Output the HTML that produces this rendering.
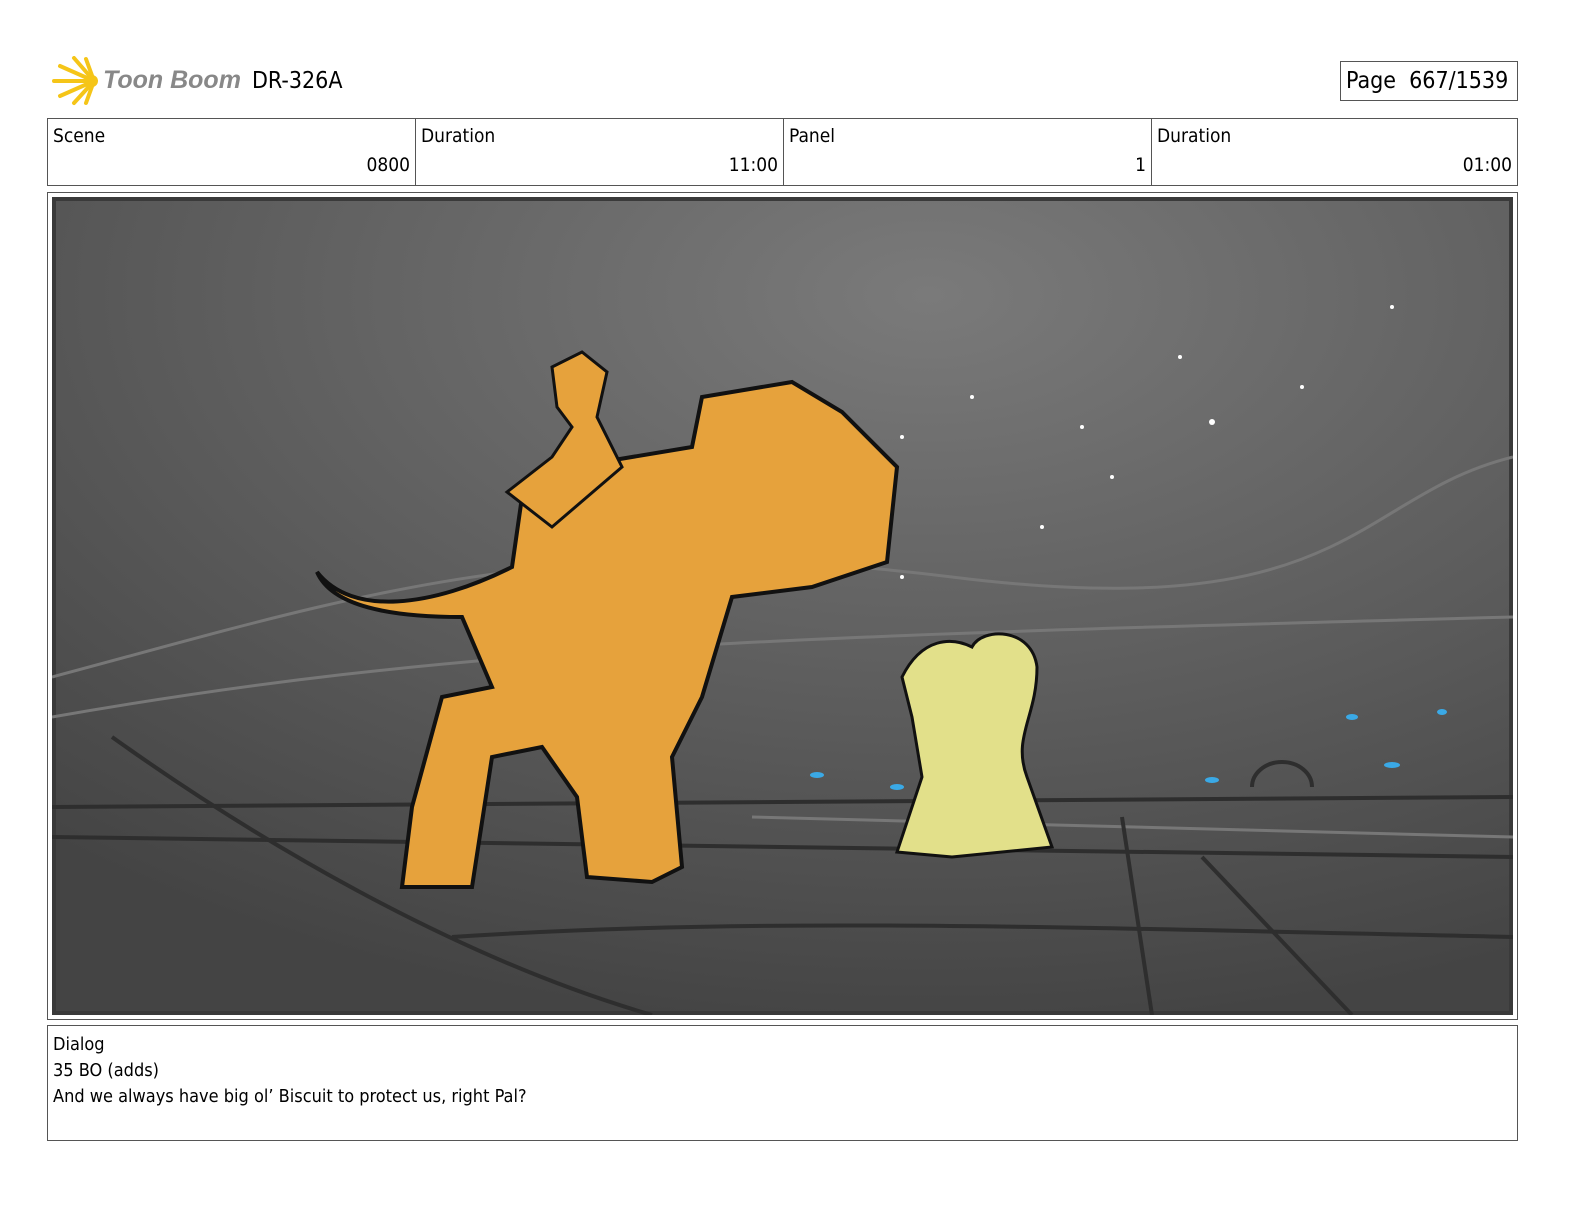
<!DOCTYPE html>
<html style="overflow:hidden"><head><meta charset="utf-8"><style>
html,body{margin:0;padding:0;overflow:hidden}
body{width:1584px;height:1224px;background:#fff;font-family:"DejaVu Sans Condensed","DejaVu Sans","Liberation Sans",sans-serif;position:relative}
.a{position:absolute;white-space:nowrap}
.cell{position:absolute;top:118px;height:68px;border:1px solid #555;box-sizing:border-box;font-size:19px}
.cell .l{position:absolute;left:5px;top:6px}
.cell .v{position:absolute;right:5px;top:35px}
</style></head><body>
<svg class="a" style="left:50px;top:56px" width="52" height="50" viewBox="0 0 52 50">
<g stroke="#f5c518" stroke-width="4" stroke-linecap="round">
<line x1="44" y1="25" x2="4" y2="25"/><line x1="44" y1="25" x2="10" y2="10"/><line x1="44" y1="25" x2="10" y2="40"/>
<line x1="44" y1="25" x2="24" y2="2"/><line x1="44" y1="25" x2="24" y2="47"/><line x1="44" y1="25" x2="36" y2="3"/><line x1="44" y1="25" x2="36" y2="47"/></g>
<circle cx="42" cy="25" r="6" fill="#f5c518"/></svg>
<div class="a" style="left:103px;top:66px;font-size:25px;font-style:italic;font-weight:bold;color:#888;font-family:'Liberation Sans',sans-serif">Toon Boom</div>
<div class="a" style="left:252px;top:68px;font-size:23px">DR-326A</div>
<div class="a" style="left:1340px;top:61px;width:178px;height:40px;border:1px solid #555;box-sizing:border-box;font-size:23px;padding:6px 0 0 5px">Page&nbsp; 667/1539</div>
<div class="cell" style="left:47px;width:369px"><span class="l">Scene</span><span class="v">0800</span></div>
<div class="cell" style="left:415px;width:369px"><span class="l">Duration</span><span class="v">11:00</span></div>
<div class="cell" style="left:783px;width:369px"><span class="l">Panel</span><span class="v">1</span></div>
<div class="cell" style="left:1151px;width:367px"><span class="l">Duration</span><span class="v">01:00</span></div>
<div class="a" style="left:47px;top:192px;width:1471px;height:828px;border:1px solid #555;box-sizing:border-box"></div>
<svg class="a" style="left:52px;top:197px" width="1461" height="818" viewBox="0 0 1461 818">
<defs><radialGradient id="g" cx="0.6" cy="0.12" r="0.9"><stop offset="0" stop-color="#7a7a7a"/><stop offset="0.6" stop-color="#5a5a5a"/><stop offset="1" stop-color="#444"/></radialGradient></defs>
<rect width="1461" height="818" fill="url(#g)" stroke="#3a3a3a" stroke-width="8"/>
<g stroke="#777" stroke-width="3" fill="none">
<path d="M0 480 C300 400 500 330 900 380 S1300 300 1461 260"/>
<path d="M0 520 C400 450 700 440 1461 420"/>
<path d="M700 620 L1461 640"/>
</g>
<g stroke="#2e2e2e" stroke-width="4" fill="none">
<path d="M0 610 L1461 600"/><path d="M0 640 L1461 660"/><path d="M60 540 C200 640 400 760 600 818"/>
<path d="M400 740 C700 720 1000 730 1461 740"/><path d="M1070 620 L1100 818"/><path d="M1150 660 L1300 818"/>
<path d="M1200 590 a30 25 0 1 1 60 0"/>
</g>
<g fill="#fff"><circle cx="850" cy="240" r="2"/><circle cx="1030" cy="230" r="2"/><circle cx="1160" cy="225" r="3"/><circle cx="1128" cy="160" r="2"/><circle cx="1340" cy="110" r="2"/><circle cx="920" cy="200" r="2"/><circle cx="1060" cy="280" r="2"/><circle cx="990" cy="330" r="2"/><circle cx="850" cy="380" r="2"/><circle cx="1250" cy="190" r="2"/></g>
<g fill="#3aa9e6"><ellipse cx="765" cy="578" rx="7" ry="3"/><ellipse cx="845" cy="590" rx="7" ry="3"/><ellipse cx="1160" cy="583" rx="7" ry="3"/><ellipse cx="1340" cy="568" rx="8" ry="3"/><ellipse cx="1300" cy="520" rx="6" ry="3"/><ellipse cx="1390" cy="515" rx="5" ry="3"/></g>
<path d="M265 375 C300 420 380 410 460 370 L470 300 L520 270 L640 250 L650 200 L740 185 L790 215 L845 270 L835 365 L760 390 L680 400 L650 500 L620 560 L630 670 L600 685 L535 680 L525 600 L490 550 L440 560 L420 690 L350 690 L360 610 L390 500 L440 490 L410 420 C340 420 280 410 265 375Z" fill="#e6a23c" stroke="#111" stroke-width="4"/>
<path d="M455 295 L500 260 L520 230 L505 210 L500 170 L530 155 L555 175 L545 220 L570 270 L500 330 Z" fill="#e6a23c" stroke="#111" stroke-width="3"/>
<path d="M850 480 C870 440 900 440 920 450 C930 430 980 430 985 470 C985 520 960 540 975 580 L1000 650 L900 660 L845 655 L870 580 L860 520 Z" fill="#e2e08a" stroke="#111" stroke-width="3"/>
</svg>
<div class="a" style="left:47px;top:1025px;width:1471px;height:116px;border:1px solid #555;box-sizing:border-box;font-size:18px;line-height:26px;padding:6px 5px">Dialog<br>35 BO (adds)<br><span style="line-height:22px">And we always have big ol’ Biscuit to protect us, right Pal?</span></div>
</body></html>
